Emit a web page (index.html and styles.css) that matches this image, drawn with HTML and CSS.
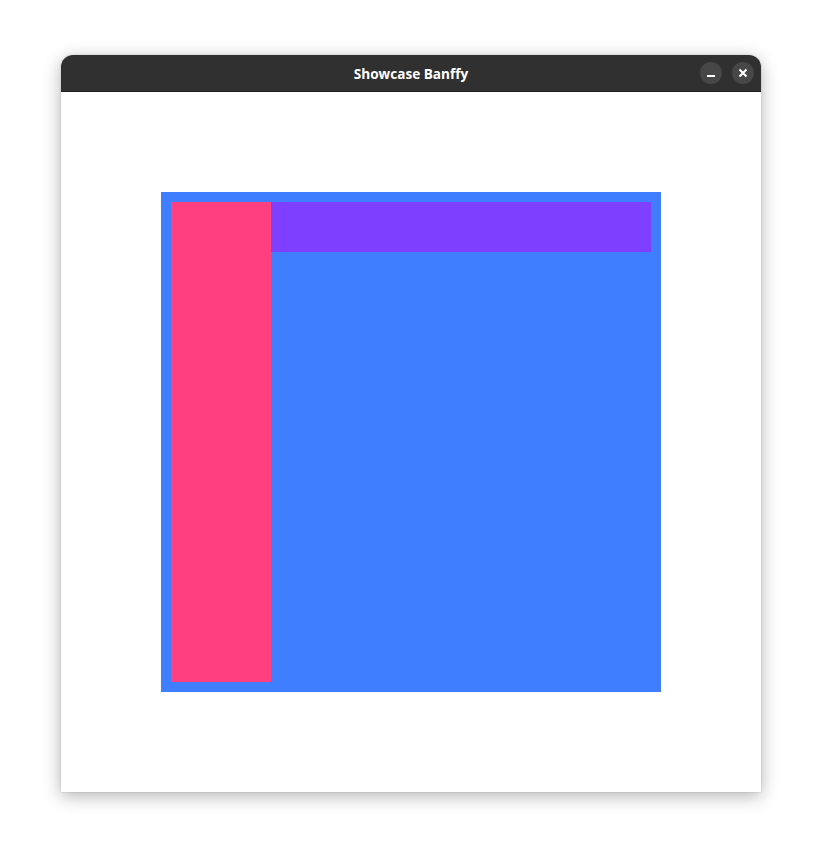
FILE: index.html
```html
<!DOCTYPE html>
<html>
<head>
<meta charset="utf-8">
<link rel="stylesheet" href="styles.css">
</head>
<body>
<div class="window">
  <div class="titlebar">
    <span class="title">Showcase Banffy</span>
    <div class="controls">
      <span class="btn"><svg width="10" height="10" viewBox="0 0 10 10"><rect x="1" y="7" width="8" height="2" fill="#fff"/></svg></span>
      <span class="btn"><svg width="10" height="10" viewBox="0 0 10 10"><path d="M1.5 1.5 L8.5 8.5 M8.5 1.5 L1.5 8.5" stroke="#fff" stroke-width="2"/></svg></span>
    </div>
  </div>
  <div class="content">
    <div class="box">
      <div class="side"></div>
      <div class="main">
        <div class="top"></div>
      </div>
    </div>
  </div>
</div>
</body>
</html>
```
FILE: styles.css
```css
html, body { margin: 0; padding: 0; background: #fff; }
body { padding: 55px 0 40px 61px; }
.window {
  width: 700px;
  border-radius: 12px 12px 0 0;
  box-shadow: 0 4px 18px rgba(0,0,0,0.30), 0 0 2px rgba(0,0,0,0.18);
  background: #fff;
}
.titlebar {
  height: 37px;
  background: #303030;
  border-radius: 12px 12px 0 0;
  display: flex;
  align-items: center;
  justify-content: center;
  position: relative;
  border-bottom: 1px solid #1f1f1f;
  box-sizing: border-box;
}
.title {
  color: #fff;
  font-family: "Open Sans", "Noto Sans", sans-serif;
  font-weight: 700;
  font-size: 13.6px;
}
.controls {
  position: absolute;
  right: 7px;
  top: 7px;
  display: flex;
  gap: 10px;
}
.btn {
  width: 22px;
  height: 22px;
  border-radius: 50%;
  background: #474747;
  display: flex;
  align-items: center;
  justify-content: center;
}
.content {
  height: 700px;
  display: flex;
  align-items: center;
  justify-content: center;
}
.box {
  width: 500px;
  height: 500px;
  box-sizing: border-box;
  padding: 10px;
  background: #3f7fff;
  display: flex;
}
.side { width: 100px; background: #ff3f7f; }
.main { flex: 1; }
.top { height: 50px; background: #7f3fff; }
```
